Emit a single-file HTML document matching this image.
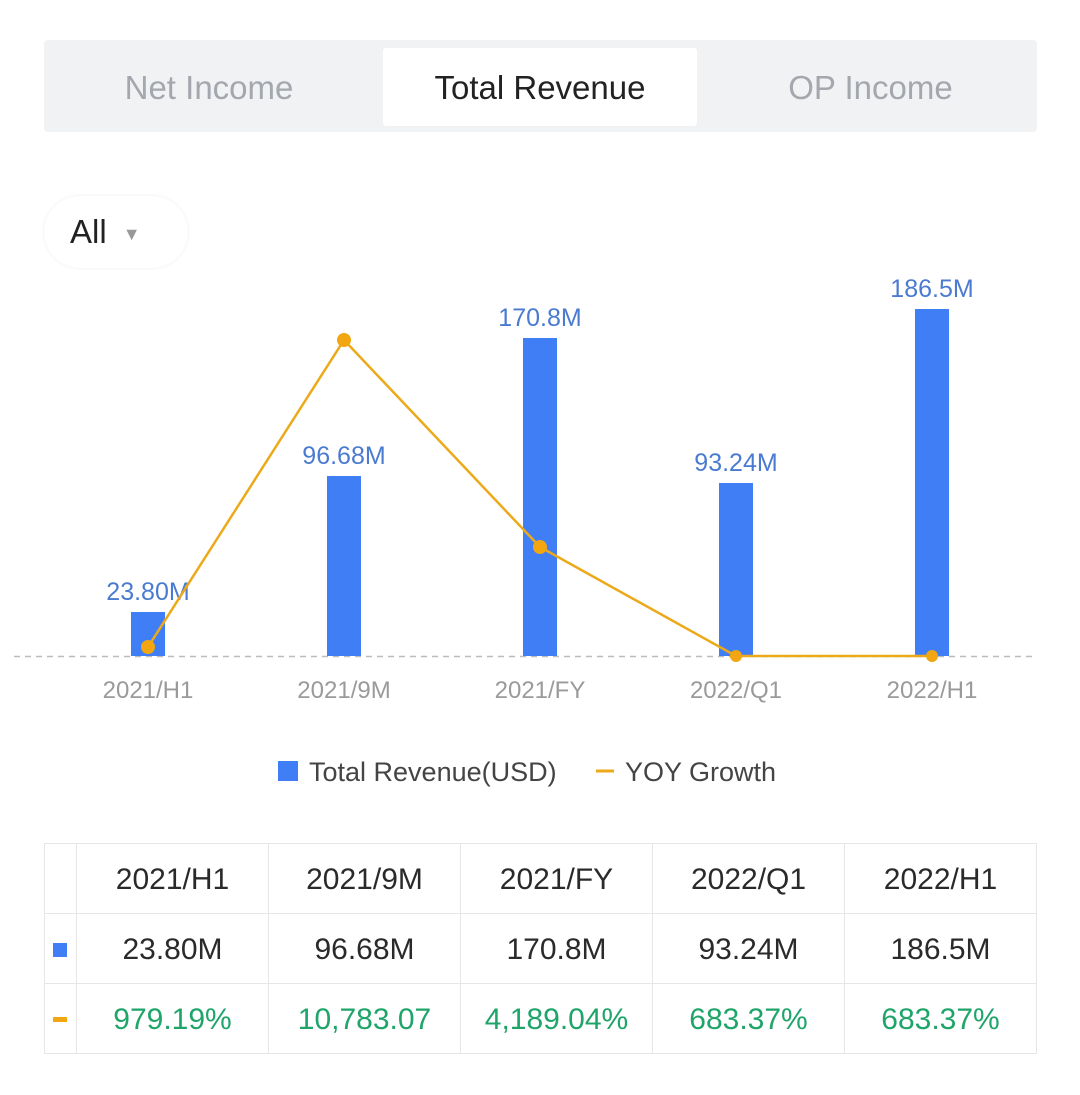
<!DOCTYPE html>
<html><head><style>
body{margin:0;width:1080px;height:1095px;background:#fff;font-family:"Liberation Sans",sans-serif;position:relative;overflow:hidden}
.tabs{position:absolute;left:44px;top:40px;width:993px;height:92px;background:#f1f2f4;border-radius:4px}
.tab{position:absolute;top:2px;height:92px;line-height:92px;font-size:33px;color:#a4a7ad;text-align:center}
.act{position:absolute;left:339px;top:8px;width:314px;height:78px;background:#fff;border-radius:3px}
.all{position:absolute;left:44px;top:196px;width:144px;height:72px;border-radius:36px;box-shadow:0 0 3px rgba(0,0,0,.08);font-size:33px;color:#222;line-height:72px}
table{position:absolute;left:44px;top:843px;border-collapse:collapse;font-size:30px;color:#2a2a2a}
td{border:1px solid #e6e6e6;height:67px;text-align:center;width:191px;padding:2px 0 0 0}
td.f{width:31px}
.g{color:#1fa56a}
</style></head><body>
<div class="tabs"><div class="act"></div>
<div class="tab" style="left:0;width:330px">Net Income</div>
<div class="tab" style="left:339px;width:314px;color:#222">Total Revenue</div>
<div class="tab" style="left:660px;width:333px">OP Income</div></div>
<div class="all"><span style="margin-left:26px">All</span><span style="font-size:18px;color:#999;margin-left:16px;vertical-align:3px">▼</span></div>
<svg style="position:absolute;left:0;top:0" width="1080" height="800" font-family="Liberation Sans,sans-serif">
<line x1="14" y1="656.5" x2="1037" y2="656.5" stroke="#bbb" stroke-width="1.5" stroke-dasharray="6,5"/>
<g fill="#3f7ef5">
<rect x="131" y="612" width="34" height="44"/><rect x="327" y="476" width="34" height="180"/>
<rect x="523" y="338" width="34" height="318"/><rect x="719" y="483" width="34" height="173"/>
<rect x="915" y="309" width="34" height="347"/></g>
<g fill="#4a7bd0" font-size="25" text-anchor="middle">
<text x="148" y="600">23.80M</text><text x="344" y="464">96.68M</text><text x="540" y="326">170.8M</text>
<text x="736" y="471">93.24M</text><text x="932" y="297">186.5M</text></g>
<polyline points="148,647 344,340 540,547 736,656 932,656" fill="none" stroke="#eca91a" stroke-width="2.5"/>
<g fill="#f2a712"><circle cx="148" cy="647" r="7"/><circle cx="344" cy="340" r="7"/><circle cx="540" cy="547" r="7"/><circle cx="736" cy="656" r="6"/><circle cx="932" cy="656" r="6"/></g>
<g fill="#9a9a9a" font-size="24" text-anchor="middle">
<text x="148" y="698">2021/H1</text><text x="344" y="698">2021/9M</text><text x="540" y="698">2021/FY</text><text x="736" y="698">2022/Q1</text><text x="932" y="698">2022/H1</text></g>
<rect x="278" y="761" width="20" height="20" fill="#3f7ef5"/>
<text x="309" y="781" font-size="27" fill="#444">Total Revenue(USD)</text>
<line x1="596" y1="771" x2="614" y2="771" stroke="#eca91a" stroke-width="3"/>
<text x="625" y="781" font-size="27" fill="#444">YOY Growth</text>
</svg>
<table>
<tr><td class="f"></td><td>2021/H1</td><td>2021/9M</td><td>2021/FY</td><td>2022/Q1</td><td>2022/H1</td></tr>
<tr><td class="f"><div style="width:14px;height:14px;background:#3f7ef5;margin:0 auto 0 8px"></div></td><td>23.80M</td><td>96.68M</td><td>170.8M</td><td>93.24M</td><td>186.5M</td></tr>
<tr class="g"><td class="f"><div style="width:14px;height:5px;background:#f2a712;margin:0 auto 0 8px"></div></td><td>979.19%</td><td>10,783.07</td><td>4,189.04%</td><td>683.37%</td><td>683.37%</td></tr>
</table>
</body></html>
